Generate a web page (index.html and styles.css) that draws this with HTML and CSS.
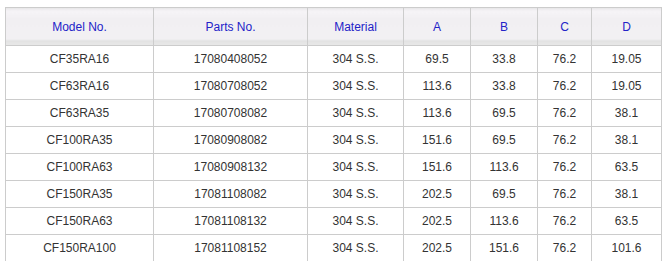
FILE: index.html
```html
<!DOCTYPE html>
<html>
<head>
<meta charset="utf-8">
<link rel="stylesheet" href="styles.css">
</head>
<body>
<table class="spec">
  <colgroup>
    <col class="c1"><col class="c2"><col class="c3"><col class="c4"><col class="c5"><col class="c6"><col class="c7">
  </colgroup>
  <thead>
    <tr><th>Model No.</th><th>Parts No.</th><th>Material</th><th>A</th><th>B</th><th>C</th><th>D</th></tr>
  </thead>
  <tbody>
    <tr><td>CF35RA16</td><td>17080408052</td><td>304 S.S.</td><td>69.5</td><td>33.8</td><td>76.2</td><td>19.05</td></tr>
    <tr><td>CF63RA16</td><td>17080708052</td><td>304 S.S.</td><td>113.6</td><td>33.8</td><td>76.2</td><td>19.05</td></tr>
    <tr><td>CF63RA35</td><td>17080708082</td><td>304 S.S.</td><td>113.6</td><td>69.5</td><td>76.2</td><td>38.1</td></tr>
    <tr><td>CF100RA35</td><td>17080908082</td><td>304 S.S.</td><td>151.6</td><td>69.5</td><td>76.2</td><td>38.1</td></tr>
    <tr><td>CF100RA63</td><td>17080908132</td><td>304 S.S.</td><td>151.6</td><td>113.6</td><td>76.2</td><td>63.5</td></tr>
    <tr><td>CF150RA35</td><td>17081108082</td><td>304 S.S.</td><td>202.5</td><td>69.5</td><td>76.2</td><td>38.1</td></tr>
    <tr><td>CF150RA63</td><td>17081108132</td><td>304 S.S.</td><td>202.5</td><td>113.6</td><td>76.2</td><td>63.5</td></tr>
    <tr><td>CF150RA100</td><td>17081108152</td><td>304 S.S.</td><td>202.5</td><td>151.6</td><td>76.2</td><td>101.6</td></tr>
  </tbody>
</table>
</body>
</html>
```

FILE: styles.css
```css
html, body {
  margin: 0;
  padding: 0;
  background: #ffffff;
}
body {
  padding: 7px 0 0 5px;
  font-family: "Liberation Sans", Arial, sans-serif;
  font-size: 12px;
}
.spec {
  border-collapse: collapse;
  table-layout: fixed;
  width: 656px;
}
.c1 { width: 148px; }
.c2 { width: 154px; }
.c3 { width: 96px; }
.c4 { width: 67px; }
.c5 { width: 67px; }
.c6 { width: 54px; }
.c7 { width: 70px; }
.spec th,
.spec td {
  border: 1px solid #cccccc;
  text-align: center;
  padding: 0;
}
.spec th {
  height: 37px;
  color: #2323c8;
  font-weight: normal;
  background: linear-gradient(to bottom, #ebe9ec 0px, #f6f4f7 3px, #f1eff2 10px, #f2f0f3 31px, #e2e2e2 32px, #e8e8e8 36px, #e4e4e4 37px);
}
.spec td {
  height: 26px;
  color: #333333;
}
```
